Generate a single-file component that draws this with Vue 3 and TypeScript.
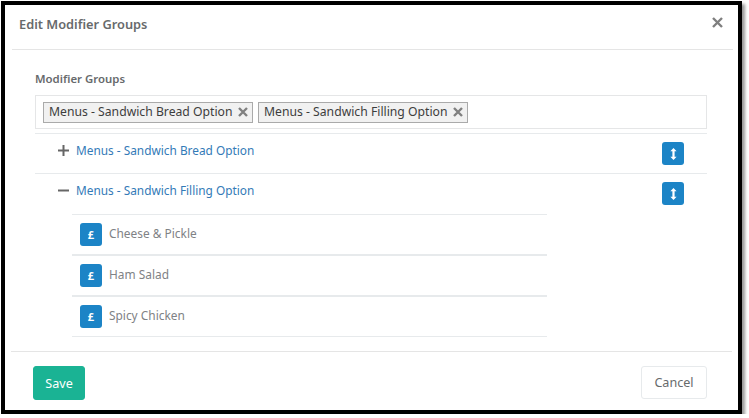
<script setup lang="ts">
const chips: string[] = ['Menus - Sandwich Bread Option', 'Menus - Sandwich Filling Option']
const items: { name: string; thick: boolean }[] = [
  { name: 'Cheese & Pickle', thick: true },
  { name: 'Ham Salad', thick: true },
  { name: 'Spicy Chicken', thick: false },
]
</script>

<template>
  <div class="frame">
    <header class="head">
      <h4 class="title">Edit Modifier Groups</h4>
      <svg class="close" width="11" height="11" viewBox="0 0 11 11"><path d="M1 1l9 9M10 1l-9 9" stroke="#7f7f7f" stroke-width="2.4" fill="none" /></svg>
    </header>
    <section class="body">
      <div class="label">Modifier Groups</div>
      <div class="select">
        <span v-for="c in chips" :key="c" class="chip">
          {{ c }}
          <svg width="10" height="10" viewBox="0 0 10 10"><path d="M1 1l8 8M9 1l-8 8" stroke="#808080" stroke-width="2.4" fill="none" /></svg>
        </span>
      </div>
      <div class="group first">
        <svg class="toggle" width="11" height="11" viewBox="0 0 11 11"><path d="M0 5.5h11M5.5 0v11" stroke="#666" stroke-width="2" fill="none" /></svg>
        <a class="link">Menus - Sandwich Bread Option</a>
        <span class="sort">
          <svg width="7" height="12" viewBox="0 0 7 12"><path d="M3.5 0L6.6 3.2H4.6V8.8H6.6L3.5 12L.4 8.8H2.4V3.2H.4Z" fill="#fff" /></svg>
        </span>
      </div>
      <div class="group">
        <svg class="toggle" width="11" height="11" viewBox="0 0 11 11"><path d="M0 5.5h11" stroke="#666" stroke-width="2" fill="none" /></svg>
        <a class="link">Menus - Sandwich Filling Option</a>
        <span class="sort">
          <svg width="7" height="12" viewBox="0 0 7 12"><path d="M3.5 0L6.6 3.2H4.6V8.8H6.6L3.5 12L.4 8.8H2.4V3.2H.4Z" fill="#fff" /></svg>
        </span>
      </div>
      <ul class="items">
        <li v-for="i in items" :key="i.name" class="item" :class="{ thick: i.thick, short: !i.thick }">
          <span class="price">£</span>
          <span class="name">{{ i.name }}</span>
        </li>
      </ul>
    </section>
    <footer class="foot">
      <button class="btn save">Save</button>
      <button class="btn cancel">Cancel</button>
    </footer>
  </div>
</template>

<style>
html, body { background: #fff; }
</style>

<style scoped>
.frame {
  box-sizing: border-box;
  width: 741px;
  height: 413px;
  margin: 1px 0 0 1px;
  border: 4px solid #000;
  background: #fff;
  box-shadow: 3px 3px 3px #999;
  font-family: "Noto Sans", sans-serif;
  font-size: 13px;
  color: #676a6c;
  padding: 0 6px;
}
.head {
  height: 45px;
  box-sizing: border-box;
  margin: 0 -1px 0 1px;
  border-bottom: 1px solid #e5e5e5;
  display: flex;
  align-items: center;
  justify-content: space-between;
  padding: 0 10px 0 7px;
}
.title { margin: 0; font-size: 12.8px; font-weight: 600; color: #676a6c; padding-bottom: 7px; }
.close { margin-bottom: 10px; }
.body { padding: 0 25px 0 24px; }
.label { margin-top: 20px; height: 18px; line-height: 18px; font-size: 11.4px; font-weight: 600; color: #676a6c; }
.select {
  margin-top: 7px;
  height: 34px;
  box-sizing: border-box;
  border: 1px solid #e5e6e7;
  display: flex;
  align-items: center;
  gap: 5px;
  padding: 0 7px;
}
.chip {
  box-sizing: border-box;
  height: 21px;
  width: 210px;
  border: 1px solid #aaa;
  background: #f1f1f1;
  color: #3d3d3d;
  display: flex;
  align-items: center;
  justify-content: space-between;
  padding: 0 4px 2px 5px;
  white-space: nowrap;
  font-size: 12.2px;
}
.chip svg { margin-top: 2px; }
.group {
  height: 40px;
  box-sizing: border-box;
  display: flex;
  align-items: flex-start;
  padding: 8px 23px 0 23px;
}
.group.first { height: 41px; margin-top: 4px; border-top: 1px solid #e7eaec; border-bottom: 1px solid #e7eaec; }
.toggle { margin-top: 3px; margin-right: 7px; flex: none; }
.link { color: #337ab7; font-size: 11.85px; line-height: 18px; margin-top: -1px; white-space: nowrap; flex: 1; }
.sort {
  width: 22px; height: 23px;
  border-radius: 3px;
  background: #1c84c6;
  display: flex;
  align-items: center;
  justify-content: center;
}
.items { list-style: none; margin: 0 0 0 37px; padding: 0; width: 475px; border-top: 1px solid #e7eaec; }
.item {
  box-sizing: border-box;
  height: 41px;
  display: flex;
  align-items: center;
  gap: 7px;
  padding-left: 8px;
  border-bottom: 1px solid #e7eaec;
}
.item.thick { border-bottom-width: 2px; }
.item.short { height: 40px; }
.price {
  width: 22px; height: 23px;
  border-radius: 3px;
  background: #1c84c6;
  color: #fff;
  font-size: 11px;
  font-weight: 700;
  display: flex;
  align-items: center;
  justify-content: center;
}
.name { font-size: 11.9px; color: #808285; margin-bottom: 3px; }
.foot {
  margin-top: 14px;
  border-top: 1px solid #e5e5e5;
  display: flex;
  justify-content: space-between;
  align-items: flex-start;
  padding: 14px 25px 0 22px;
}
.btn { box-sizing: border-box; font-family: inherit; font-size: 12.6px; border-radius: 3px; padding: 0; }
.save { width: 52px; height: 34px; background: #1ab394; border: 1px solid #1ab394; color: #fff; }
.cancel { width: 66px; height: 33px; background: #fff; border: 1px solid #e7eaec; color: #676a6c; }
</style>
